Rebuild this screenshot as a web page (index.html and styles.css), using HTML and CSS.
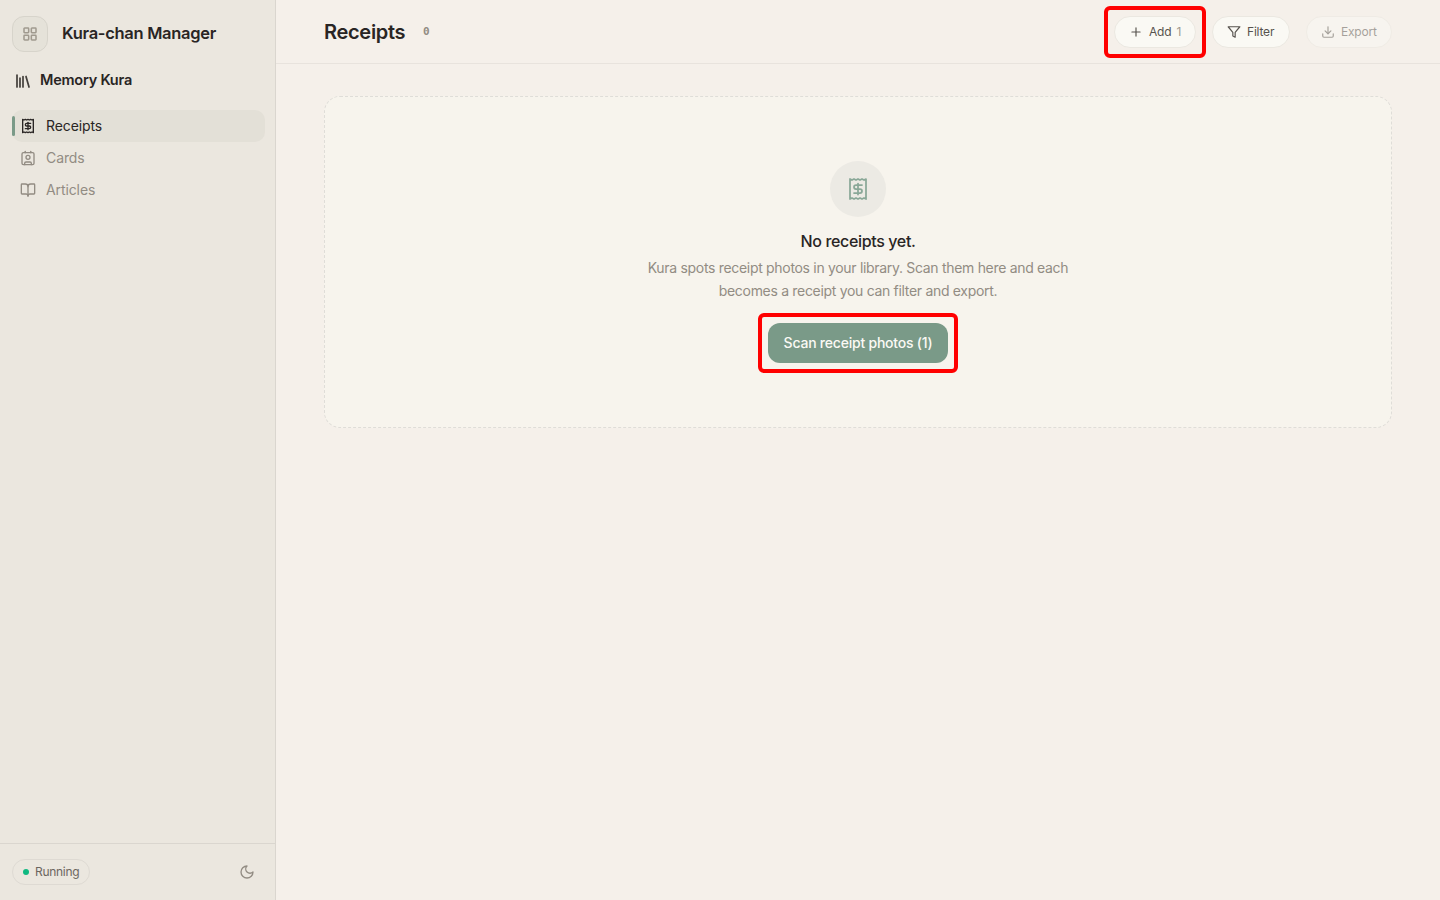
FILE: index.html
```html
<!DOCTYPE html>
<html lang="en">
<head>
  <meta charset="UTF-8">
  <meta name="viewport" content="width=device-width, initial-scale=1.0">
  <title>Receipts - Kura-chan Manager</title>
  <link rel="stylesheet" href="styles.css">
</head>
<body>
  <div class="app">
    <aside class="sidebar">
      <div class="brand">
        <button class="brand-btn" aria-label="Apps">
          <svg class="icon" width="16" height="16" viewBox="0 0 24 24"><rect x="3" y="3" width="7" height="7" rx="1"/><rect x="14" y="3" width="7" height="7" rx="1"/><rect x="14" y="14" width="7" height="7" rx="1"/><rect x="3" y="14" width="7" height="7" rx="1"/></svg>
        </button>
        <span class="brand-name">Kura-chan Manager</span>
      </div>
      <div class="section-title">
        <svg class="icon" width="18" height="18" viewBox="0 0 24 24"><path d="m16 6 4 14"/><path d="M12 6v14"/><path d="M8 8v12"/><path d="M4 4v16"/></svg>
        <span class="section-name">Memory Kura</span>
      </div>
      <nav class="nav">
        <a class="nav-item active">
          <svg class="icon" width="16" height="16" viewBox="0 0 24 24"><path d="M4 2v20l2-1 2 1 2-1 2 1 2-1 2 1 2-1 2 1V2l-2 1-2-1-2 1-2-1-2 1-2-1-2 1Z"/><path d="M16 8h-6a2 2 0 1 0 0 4h4a2 2 0 1 1 0 4H8"/><path d="M12 17.5v-11"/></svg>
          <span class="nav-text">Receipts</span>
        </a>
        <a class="nav-item">
          <svg class="icon" width="16" height="16" viewBox="0 0 24 24"><path d="M16 2v2"/><path d="M7 22v-2a2 2 0 0 1 2-2h6a2 2 0 0 1 2 2v2"/><path d="M8 2v2"/><circle cx="12" cy="11" r="3"/><rect x="3" y="4" width="18" height="18" rx="2"/></svg>
          <span class="nav-text">Cards</span>
        </a>
        <a class="nav-item">
          <svg class="icon" width="16" height="16" viewBox="0 0 24 24"><path d="M12 7v14"/><path d="M3 18a1 1 0 0 1-1-1V4a1 1 0 0 1 1-1h5a4 4 0 0 1 4 4 4 4 0 0 1 4-4h5a1 1 0 0 1 1 1v13a1 1 0 0 1-1 1h-6a3 3 0 0 0-3 3 3 3 0 0 0-3-3z"/></svg>
          <span class="nav-text">Articles</span>
        </a>
      </nav>
      <div class="sidebar-footer">
        <div class="status"><span class="dot"></span><span class="status-text">Running</span></div>
        <button class="theme-btn" aria-label="Toggle theme">
          <svg class="icon" width="16" height="16" viewBox="0 0 24 24"><path d="M12 3a6 6 0 0 0 9 9 9 9 0 1 1-9-9Z"/></svg>
        </button>
      </div>
    </aside>

    <main class="main">
      <header class="topbar">
        <h1 class="title">Receipts</h1>
        <span class="count">0</span>
        <div class="actions">
          <div class="highlight highlight-add">
            <button class="pill">
              <svg class="icon" width="14" height="14" viewBox="0 0 24 24"><path d="M5 12h14"/><path d="M12 5v14"/></svg>
              <span>Add</span>
              <span class="pill-count">1</span>
            </button>
          </div>
          <button class="pill pill-filter">
            <svg class="icon" width="14" height="14" viewBox="0 0 24 24"><path d="M22 3H2l8 9.46V19l4 2v-8.54L22 3z"/></svg>
            <span>Filter</span>
          </button>
          <button class="pill pill-export" disabled>
            <svg class="icon" width="14" height="14" viewBox="0 0 24 24"><path d="M21 15v4a2 2 0 0 1-2 2H5a2 2 0 0 1-2-2v-4"/><path d="m7 10 5 5 5-5"/><path d="M12 15V3"/></svg>
            <span>Export</span>
          </button>
        </div>
      </header>

      <section class="empty">
        <div class="empty-icon">
          <svg class="icon" width="24" height="24" viewBox="0 0 24 24"><path d="M4 2v20l2-1 2 1 2-1 2 1 2-1 2 1 2-1 2 1V2l-2 1-2-1-2 1-2-1-2 1-2-1-2 1Z"/><path d="M16 8h-6a2 2 0 1 0 0 4h4a2 2 0 1 1 0 4H8"/><path d="M12 17.5v-11"/></svg>
        </div>
        <h2 class="empty-title">No receipts yet.</h2>
        <p class="empty-text">Kura spots receipt photos in your library. Scan them here and each<br>becomes a receipt you can filter and export.</p>
        <div class="highlight highlight-scan">
          <button class="scan-btn">Scan receipt photos (1)</button>
        </div>
      </section>
    </main>
  </div>
</body>
</html>
```
FILE: styles.css
```css
* {
  box-sizing: border-box;
}
body {
  margin: 0;
  font-family: Inter, "Liberation Sans", sans-serif;
  color: #292524;
  background: #f5f0ea;
}
button {
  font-family: inherit;
  padding: 0;
  margin: 0;
  border: none;
  background: none;
}
span,
h1,
h2 {
  white-space: nowrap;
}
.icon {
  display: block;
  flex: none;
  fill: none;
  stroke: currentColor;
  stroke-width: 2;
  stroke-linecap: round;
  stroke-linejoin: round;
}
.app {
  display: flex;
  height: 100vh;
}

/* sidebar */
.sidebar {
  display: flex;
  flex-direction: column;
  flex: none;
  width: 276px;
  border-right: 1px solid #dad6cf;
  background: #ebe7df;
}
.brand {
  display: flex;
  align-items: center;
  gap: 14px;
  height: 36px;
  margin: 16px 12px 0;
}
.brand-btn {
  display: flex;
  align-items: center;
  justify-content: center;
  width: 36px;
  height: 36px;
  border: 1px solid #d7d4cb;
  border-radius: 12px;
  background: #e5e2d9;
  color: #a09a8f;
}
.brand-btn .icon {
  stroke-width: 2.3;
}
.brand-name {
  font-size: 16.5px;
  font-weight: 600;
  line-height: 22px;
  letter-spacing: -0.3px;
  padding-bottom: 2px;
}
.section-title {
  display: flex;
  align-items: center;
  gap: 8px;
  height: 24px;
  margin: 15px 14px 0;
}
.section-title .icon {
  margin-top: 3px;
  stroke-width: 2.3;
  color: #44403c;
}
.section-name {
  font-size: 14.5px;
  font-weight: 600;
  letter-spacing: -0.23px;
}
.nav {
  margin: 19px 10px 0 12px;
}
.nav-item {
  position: relative;
  display: flex;
  align-items: center;
  gap: 10px;
  height: 32px;
  padding-left: 8px;
  border-radius: 10px;
  font-size: 14px;
  font-weight: 400;
  letter-spacing: -0.1px;
  color: #928c83;
}
.nav-text {
  padding-bottom: 2px;
}
.nav-item.active {
  color: #292524;
  background: #e3e0d7;
}
.nav-item.active::before {
  content: "";
  position: absolute;
  left: 0;
  top: 6px;
  width: 3px;
  height: 20px;
  border-radius: 2px;
  background: #7a9a88;
}
.sidebar-footer {
  display: flex;
  align-items: center;
  justify-content: space-between;
  height: 57px;
  margin-top: auto;
  padding: 0 20px 0 12px;
  border-top: 1px solid #dad6cf;
}
.status {
  display: flex;
  align-items: center;
  gap: 6px;
  width: 78px;
  height: 26px;
  padding-left: 10px;
  border: 1px solid #dedad3;
  border-radius: 13px;
  font-size: 12px;
  letter-spacing: -0.3px;
  color: #6b6660;
}
.status-text {
  padding-bottom: 1px;
}
.dot {
  width: 6px;
  height: 6px;
  border-radius: 50%;
  background: #10b981;
}
.theme-btn {
  color: #928c83;
}

/* main */
.main {
  flex: 1;
  min-width: 0;
}
.topbar {
  display: flex;
  align-items: center;
  height: 64px;
  padding: 0 48px;
  border-bottom: 1px solid #e8e3dd;
}
.title {
  margin: 0;
  width: 99px;
  font-size: 20px;
  font-weight: 600;
  letter-spacing: -0.3px;
}
.count {
  font-family: "DejaVu Sans Mono", monospace;
  font-size: 11px;
  font-weight: 700;
  color: #928c83;
}
.actions {
  display: flex;
  align-items: center;
  margin-left: auto;
}
.highlight {
  border: 4px solid #ff0000;
  border-radius: 6px;
}
.highlight-add {
  width: 102px;
  height: 52px;
  padding: 6px;
  margin-right: 6px;
}
.pill {
  display: flex;
  align-items: center;
  gap: 6px;
  width: 82px;
  height: 32px;
  padding-left: 14px;
  border: 1px solid #ebe8e1;
  border-radius: 16px;
  background: #faf9f4;
  font-size: 12px;
  letter-spacing: -0.2px;
  color: #57534e;
}
.pill-count {
  margin-left: -1px;
  color: #a09a8f;
}
.pill-filter {
  width: 78px;
  margin-right: 16px;
}
.pill-export {
  width: 86px;
  opacity: 0.5;
}

/* empty state */
.empty {
  display: flex;
  flex-direction: column;
  align-items: center;
  height: 332px;
  margin: 32px 48px 0;
  padding-top: 64px;
  border: 1px dashed #dfddd8;
  border-radius: 16px;
  background: #f7f4ed;
}
.empty-icon {
  display: flex;
  align-items: center;
  justify-content: center;
  width: 56px;
  height: 56px;
  border-radius: 50%;
  background: #eceae4;
  color: #8aa898;
}
.empty-icon .icon {
  stroke-width: 1.75;
}
.empty-title {
  margin: 12px 0 0;
  font-size: 16px;
  font-weight: 500;
  line-height: 24px;
  letter-spacing: -0.35px;
}
.empty-text {
  margin: 3px 0 0;
  font-size: 14px;
  line-height: 23px;
  letter-spacing: -0.31px;
  text-align: center;
  white-space: nowrap;
  color: #928c83;
}
.highlight-scan {
  width: 200px;
  height: 60px;
  margin-top: 11px;
  padding: 6px;
}
.scan-btn {
  display: block;
  width: 180px;
  height: 40px;
  padding-bottom: 2px;
  border-radius: 12px;
  background: #7a9a88;
  color: #faf9f4;
  font-size: 14px;
  font-weight: 500;
  letter-spacing: -0.22px;
  white-space: nowrap;
}
```
